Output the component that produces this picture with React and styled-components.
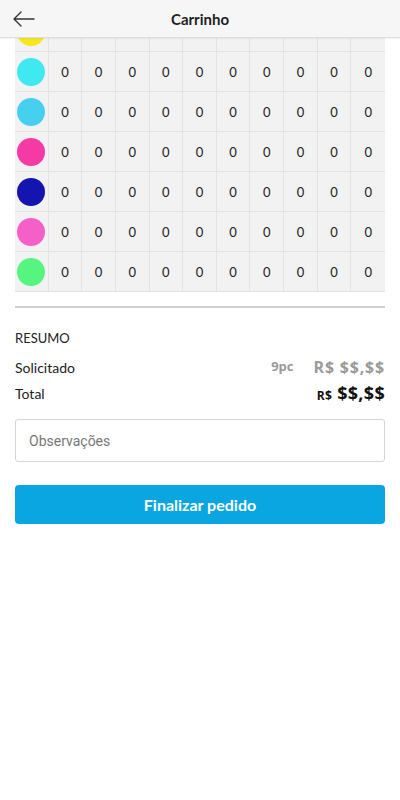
import React, { useLayoutEffect, useRef } from "react";
import styled, { createGlobalStyle } from "styled-components";

const GlobalStyle = createGlobalStyle`
  html, body, #root {
    height: 100%;
  }
  body {
    margin: 0;
    background: #ffffff;
    font-family: "Lato", "Liberation Sans", sans-serif;
    color: #222;
  }
`;

const Page = styled.div`
  height: 100vh;
  display: flex;
  flex-direction: column;
  background: #ffffff;
`;

const Header = styled.header`
  flex: 0 0 38px;
  box-sizing: border-box;
  display: grid;
  grid-template-columns: 48px 1fr 48px;
  align-items: center;
  background: #f6f6f6;
  border-bottom: 1px solid #dedede;
  box-shadow: 0 1px 2px rgba(0, 0, 0, 0.06);
  position: relative;
  z-index: 1;
  h1 {
    margin: 0;
    text-align: center;
    font-size: 15px;
    font-weight: 700;
    color: #222;
  }
`;

const BackButton = styled.button`
  border: none;
  background: none;
  padding: 0 0 0 13px;
  height: 37px;
  display: flex;
  align-items: center;
  cursor: pointer;
`;

const Content = styled.main`
  flex: 1;
  overflow-y: auto;
  scrollbar-width: none;
  &::-webkit-scrollbar {
    display: none;
  }
  padding: 0 15px 340px;
`;

const Grid = styled.div`
  display: grid;
  grid-template-columns: repeat(11, 1fr);
  background: #f2f2f2;
`;

const Cell = styled.div`
  height: 40px;
  box-sizing: border-box;
  display: flex;
  align-items: center;
  justify-content: center;
  border-bottom: 1px solid #e3e3e3;
  border-right: ${(p) => (p.$last ? "none" : "1px solid #e3e3e3")};
  font-size: 13px;
  font-weight: 400;
  color: #222;
`;

const Dot = styled.span`
  width: 28px;
  height: 28px;
  border-radius: 50%;
  background: ${(p) => p.$color};
`;

const Divider = styled.hr`
  margin: 14px 0 0;
  border: none;
  height: 2px;
  background: #d0d0d0;
`;

const Summary = styled.section`
  padding-top: 22px;
  h2 {
    margin: 0 0 8px;
    font-size: 13px;
    font-weight: 400;
    color: #222;
    text-transform: uppercase;
  }
`;

const SummaryRow = styled.div`
  display: flex;
  align-items: center;
  height: 26px;
  font-size: 14px;
  color: #222;
  span.label {
    flex: 1;
  }
`;

const Pieces = styled.span`
  font-family: "Open Sans", "Liberation Sans", sans-serif;
  font-size: 13px;
  font-weight: 700;
  color: #999;
  margin-right: 20px;
  margin-top: -3px;
`;

const Price = styled.span`
  font-family: "Open Sans", "Liberation Sans", sans-serif;
  font-weight: 700;
  font-size: ${(p) => (p.$total ? "18px" : "16px")};
  color: ${(p) => (p.$total ? "#111" : "#9a9a9a")};
  letter-spacing: ${(p) => (p.$total ? "0.3px" : "0.8px")};
  small {
    font-size: ${(p) => (p.$total ? "12px" : "16px")};
    margin-right: 5px;
  }
`;

const NotesInput = styled.input`
  display: block;
  width: 100%;
  box-sizing: border-box;
  height: 43px;
  margin-top: 13px;
  padding: 0 13px;
  border: 1px solid #d6d6d6;
  border-radius: 3px;
  font-family: "Roboto", "Liberation Sans", sans-serif;
  font-size: 14px;
  color: #333;
  outline: none;
  &::placeholder {
    color: #777;
  }
`;

const SubmitButton = styled.button`
  display: block;
  width: 100%;
  height: 39px;
  margin-top: 23px;
  border: none;
  border-radius: 4px;
  background: #09a6e2;
  color: #ffffff;
  font-family: "Lato", "Liberation Sans", sans-serif;
  font-size: 16px;
  font-weight: 700;
  cursor: pointer;
`;

const colors = [
  "#e53935",
  "#ff9800",
  "#f5e81e",
  "#40e8f0",
  "#45d0f0",
  "#f53aa6",
  "#1414b0",
  "#f55fc8",
  "#55f57f",
];

const sizes = 10;

export default function App() {
  const scrollRef = useRef(null);

  useLayoutEffect(() => {
    if (scrollRef.current) scrollRef.current.scrollTop = 106;
  }, []);

  return (
    <>
      <GlobalStyle />
      <Page>
        <Header>
          <BackButton aria-label="Voltar">
            <svg width="22" height="16" viewBox="0 0 22 16" fill="none">
              <path
                d="M8 1 L1 8 L8 15 M1 8 H21"
                stroke="#333"
                strokeWidth="1.4"
                strokeLinecap="round"
                strokeLinejoin="round"
              />
            </svg>
          </BackButton>
          <h1>Carrinho</h1>
          <span />
        </Header>
        <Content ref={scrollRef}>
          <Grid>
            {colors.map((c) => (
              <React.Fragment key={c}>
                <Cell>
                  <Dot $color={c} />
                </Cell>
                {Array.from({ length: sizes }).map((_, i) => (
                  <Cell key={i} $last={i === sizes - 1}>
                    0
                  </Cell>
                ))}
              </React.Fragment>
            ))}
          </Grid>
          <Divider />
          <Summary>
            <h2>Resumo</h2>
            <SummaryRow>
              <span className="label">Solicitado</span>
              <Pieces>9pc</Pieces>
              <Price>
                <small>R$</small>$$,$$
              </Price>
            </SummaryRow>
            <SummaryRow>
              <span className="label">Total</span>
              <Price $total>
                <small>R$</small>$$,$$
              </Price>
            </SummaryRow>
          </Summary>
          <NotesInput placeholder="Observações" />
          <SubmitButton>Finalizar pedido</SubmitButton>
        </Content>
      </Page>
    </>
  );
}
